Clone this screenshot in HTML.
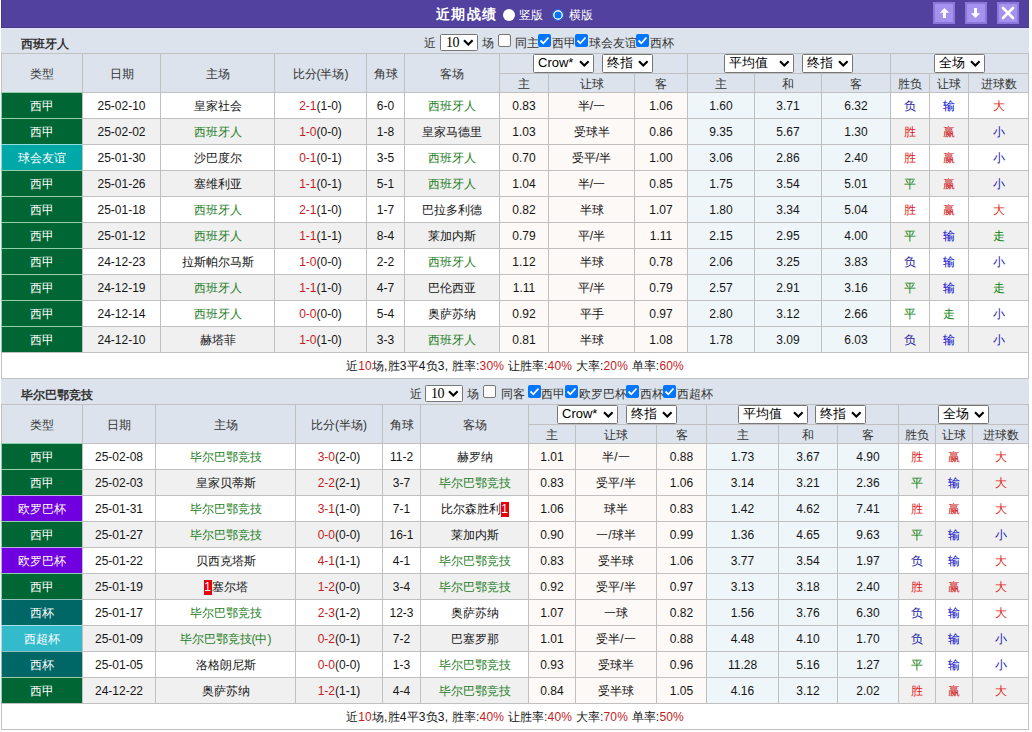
<!DOCTYPE html>
<html><head><meta charset="utf-8"><style>
*{margin:0;padding:0;box-sizing:border-box}
html,body{width:1032px;height:732px;overflow:hidden;background:#fff}
body{position:relative;font-family:"Liberation Sans",sans-serif;font-size:12px;color:#333}
body>div{position:absolute}
.c{text-align:center;white-space:nowrap;overflow:hidden;color:#151515;padding-top:1px}
.sm{letter-spacing:0.17px}
.h{color:#333}
.ty{color:#fff}
.g{color:#1f7f1f}
.r{color:#c41c24}
.bd{display:inline-block;background:#e8000b;color:#fff;font-weight:normal;width:8px;height:15px;line-height:15px;text-align:center;vertical-align:middle}
.sel{background:#fff;border:1px solid #767676;border-radius:1.5px;font-size:13px;color:#000;padding-left:4px;white-space:nowrap}
.sel i{position:absolute;right:3px;top:4.5px;width:11px;height:8px;line-height:0}
.s10{font-family:'Liberation Serif',serif;font-size:14px;padding-left:5px;padding-top:0;letter-spacing:-0.5px}
.s10 i{top:4px}
.ttl{color:#fff;font-weight:bold;font-size:14px;letter-spacing:1.3px}
.sec{font-weight:bold;color:#333}
</style></head>
<body>
<div style="left:1px;top:0;width:1028px;height:28px;background:#52419e;border-left:1px solid #483a87;border-bottom:1px solid #483a87"></div>
<div style="left:1px;top:28px;width:1028px;height:1px;background:#e4e4fa"></div>
<div style="left:1px;top:29px;width:1028px;height:24px;background:#dce3ec"></div>
<div style="left:1px;top:379px;width:1028px;height:25px;background:#dce3ec"></div>
<div style="left:1px;top:53px;width:1028px;height:326px;background:#c0c0c0"></div>
<div class="c h" style="left:2px;top:54px;width:80px;height:38px;background:#dce3ec;line-height:38px;">类型</div>
<div class="c h" style="left:83px;top:54px;width:77px;height:38px;background:#dce3ec;line-height:38px;">日期</div>
<div class="c h" style="left:161px;top:54px;width:113px;height:38px;background:#dce3ec;line-height:38px;">主场</div>
<div class="c h" style="left:275px;top:54px;width:91px;height:38px;background:#dce3ec;line-height:38px;">比分(半场)</div>
<div class="c h" style="left:367px;top:54px;width:37px;height:38px;background:#dce3ec;line-height:38px;">角球</div>
<div class="c h" style="left:405px;top:54px;width:94px;height:38px;background:#dce3ec;line-height:38px;">客场</div>
<div class="c h" style="left:500px;top:54px;width:187px;height:19px;background:#dce3ec;line-height:19px;"></div>
<div class="c h" style="left:688px;top:54px;width:202px;height:19px;background:#dce3ec;line-height:19px;"></div>
<div class="c h" style="left:891px;top:54px;width:137px;height:19px;background:#dce3ec;line-height:19px;"></div>
<div class="c h" style="left:500px;top:74px;width:48px;height:18px;background:#dce3ec;line-height:18px;">主</div>
<div class="c h" style="left:549px;top:74px;width:85px;height:18px;background:#dce3ec;line-height:18px;">让球</div>
<div class="c h" style="left:635px;top:74px;width:52px;height:18px;background:#dce3ec;line-height:18px;">客</div>
<div class="c h" style="left:688px;top:74px;width:66px;height:18px;background:#dce3ec;line-height:18px;">主</div>
<div class="c h" style="left:755px;top:74px;width:66px;height:18px;background:#dce3ec;line-height:18px;">和</div>
<div class="c h" style="left:822px;top:74px;width:68px;height:18px;background:#dce3ec;line-height:18px;">客</div>
<div class="c h" style="left:891px;top:74px;width:38px;height:18px;background:#dce3ec;line-height:18px;">胜负</div>
<div class="c h" style="left:930px;top:74px;width:38px;height:18px;background:#dce3ec;line-height:18px;">让球</div>
<div class="c h" style="left:969px;top:74px;width:59px;height:18px;background:#dce3ec;line-height:18px;">进球数</div>
<div class="c ty" style="left:1px;top:92px;width:81px;height:26px;background:#006633;border-top:1px solid #8fcfaa;border-left:1px solid #8fcfaa;line-height:25px">西甲</div>
<div class="c" style="left:83px;top:93px;width:77px;height:25px;background:#ffffff;line-height:25px;">25-02-10</div>
<div class="c" style="left:161px;top:93px;width:113px;height:25px;background:#ffffff;line-height:25px;"><span class="">皇家社会</span></div>
<div class="c" style="left:275px;top:93px;width:91px;height:25px;background:#ffffff;line-height:25px;"><span class="r">2-1</span>(1-0)</div>
<div class="c" style="left:367px;top:93px;width:37px;height:25px;background:#ffffff;line-height:25px;">6-0</div>
<div class="c" style="left:405px;top:93px;width:94px;height:25px;background:#ffffff;line-height:25px;"><span class="g">西班牙人</span></div>
<div class="c" style="left:500px;top:93px;width:48px;height:25px;background:#fdf9f6;line-height:25px;">0.83</div>
<div class="c" style="left:549px;top:93px;width:85px;height:25px;background:#fdf9f6;line-height:25px;">半/一</div>
<div class="c" style="left:635px;top:93px;width:52px;height:25px;background:#fdf9f6;line-height:25px;">1.06</div>
<div class="c" style="left:688px;top:93px;width:66px;height:25px;background:#eff6fa;line-height:25px;">1.60</div>
<div class="c" style="left:755px;top:93px;width:66px;height:25px;background:#eff6fa;line-height:25px;">3.71</div>
<div class="c" style="left:822px;top:93px;width:68px;height:25px;background:#eff6fa;line-height:25px;">6.32</div>
<div class="c" style="left:891px;top:93px;width:38px;height:25px;background:#ffffff;line-height:25px;"><span style="color:#1a1aa0">负</span></div>
<div class="c" style="left:930px;top:93px;width:38px;height:25px;background:#ffffff;line-height:25px;"><span style="color:#0000c8">输</span></div>
<div class="c" style="left:969px;top:93px;width:59px;height:25px;background:#ffffff;line-height:25px;"><span style="color:#e02818">大</span></div>
<div class="c ty" style="left:1px;top:118px;width:81px;height:26px;background:#006633;border-top:1px solid #8fcfaa;border-left:1px solid #8fcfaa;line-height:25px">西甲</div>
<div class="c" style="left:83px;top:119px;width:77px;height:25px;background:#f0f0f0;line-height:25px;">25-02-02</div>
<div class="c" style="left:161px;top:119px;width:113px;height:25px;background:#f0f0f0;line-height:25px;"><span class="g">西班牙人</span></div>
<div class="c" style="left:275px;top:119px;width:91px;height:25px;background:#f0f0f0;line-height:25px;"><span class="r">1-0</span>(0-0)</div>
<div class="c" style="left:367px;top:119px;width:37px;height:25px;background:#f0f0f0;line-height:25px;">1-8</div>
<div class="c" style="left:405px;top:119px;width:94px;height:25px;background:#f0f0f0;line-height:25px;"><span class="">皇家马德里</span></div>
<div class="c" style="left:500px;top:119px;width:48px;height:25px;background:#fdf9f6;line-height:25px;">1.03</div>
<div class="c" style="left:549px;top:119px;width:85px;height:25px;background:#fdf9f6;line-height:25px;">受球半</div>
<div class="c" style="left:635px;top:119px;width:52px;height:25px;background:#fdf9f6;line-height:25px;">0.86</div>
<div class="c" style="left:688px;top:119px;width:66px;height:25px;background:#eff6fa;line-height:25px;">9.35</div>
<div class="c" style="left:755px;top:119px;width:66px;height:25px;background:#eff6fa;line-height:25px;">5.67</div>
<div class="c" style="left:822px;top:119px;width:68px;height:25px;background:#eff6fa;line-height:25px;">1.30</div>
<div class="c" style="left:891px;top:119px;width:38px;height:25px;background:#f0f0f0;line-height:25px;"><span style="color:#e01818">胜</span></div>
<div class="c" style="left:930px;top:119px;width:38px;height:25px;background:#f0f0f0;line-height:25px;"><span style="color:#d01818">赢</span></div>
<div class="c" style="left:969px;top:119px;width:59px;height:25px;background:#f0f0f0;line-height:25px;"><span style="color:#1a1ab0">小</span></div>
<div class="c ty" style="left:1px;top:144px;width:81px;height:26px;background:#00a8a8;border-top:1px solid #8fdcdc;border-left:1px solid #8fdcdc;line-height:25px">球会友谊</div>
<div class="c" style="left:83px;top:145px;width:77px;height:25px;background:#ffffff;line-height:25px;">25-01-30</div>
<div class="c" style="left:161px;top:145px;width:113px;height:25px;background:#ffffff;line-height:25px;"><span class="">沙巴度尔</span></div>
<div class="c" style="left:275px;top:145px;width:91px;height:25px;background:#ffffff;line-height:25px;"><span class="r">0-1</span>(0-1)</div>
<div class="c" style="left:367px;top:145px;width:37px;height:25px;background:#ffffff;line-height:25px;">3-5</div>
<div class="c" style="left:405px;top:145px;width:94px;height:25px;background:#ffffff;line-height:25px;"><span class="g">西班牙人</span></div>
<div class="c" style="left:500px;top:145px;width:48px;height:25px;background:#fdf9f6;line-height:25px;">0.70</div>
<div class="c" style="left:549px;top:145px;width:85px;height:25px;background:#fdf9f6;line-height:25px;">受平/半</div>
<div class="c" style="left:635px;top:145px;width:52px;height:25px;background:#fdf9f6;line-height:25px;">1.00</div>
<div class="c" style="left:688px;top:145px;width:66px;height:25px;background:#eff6fa;line-height:25px;">3.06</div>
<div class="c" style="left:755px;top:145px;width:66px;height:25px;background:#eff6fa;line-height:25px;">2.86</div>
<div class="c" style="left:822px;top:145px;width:68px;height:25px;background:#eff6fa;line-height:25px;">2.40</div>
<div class="c" style="left:891px;top:145px;width:38px;height:25px;background:#ffffff;line-height:25px;"><span style="color:#e01818">胜</span></div>
<div class="c" style="left:930px;top:145px;width:38px;height:25px;background:#ffffff;line-height:25px;"><span style="color:#d01818">赢</span></div>
<div class="c" style="left:969px;top:145px;width:59px;height:25px;background:#ffffff;line-height:25px;"><span style="color:#1a1ab0">小</span></div>
<div class="c ty" style="left:1px;top:170px;width:81px;height:26px;background:#006633;border-top:1px solid #8fcfaa;border-left:1px solid #8fcfaa;line-height:25px">西甲</div>
<div class="c" style="left:83px;top:171px;width:77px;height:25px;background:#f0f0f0;line-height:25px;">25-01-26</div>
<div class="c" style="left:161px;top:171px;width:113px;height:25px;background:#f0f0f0;line-height:25px;"><span class="">塞维利亚</span></div>
<div class="c" style="left:275px;top:171px;width:91px;height:25px;background:#f0f0f0;line-height:25px;"><span class="r">1-1</span>(0-1)</div>
<div class="c" style="left:367px;top:171px;width:37px;height:25px;background:#f0f0f0;line-height:25px;">5-1</div>
<div class="c" style="left:405px;top:171px;width:94px;height:25px;background:#f0f0f0;line-height:25px;"><span class="g">西班牙人</span></div>
<div class="c" style="left:500px;top:171px;width:48px;height:25px;background:#fdf9f6;line-height:25px;">1.04</div>
<div class="c" style="left:549px;top:171px;width:85px;height:25px;background:#fdf9f6;line-height:25px;">半/一</div>
<div class="c" style="left:635px;top:171px;width:52px;height:25px;background:#fdf9f6;line-height:25px;">0.85</div>
<div class="c" style="left:688px;top:171px;width:66px;height:25px;background:#eff6fa;line-height:25px;">1.75</div>
<div class="c" style="left:755px;top:171px;width:66px;height:25px;background:#eff6fa;line-height:25px;">3.54</div>
<div class="c" style="left:822px;top:171px;width:68px;height:25px;background:#eff6fa;line-height:25px;">5.01</div>
<div class="c" style="left:891px;top:171px;width:38px;height:25px;background:#f0f0f0;line-height:25px;"><span style="color:#0a800a">平</span></div>
<div class="c" style="left:930px;top:171px;width:38px;height:25px;background:#f0f0f0;line-height:25px;"><span style="color:#d01818">赢</span></div>
<div class="c" style="left:969px;top:171px;width:59px;height:25px;background:#f0f0f0;line-height:25px;"><span style="color:#1a1ab0">小</span></div>
<div class="c ty" style="left:1px;top:196px;width:81px;height:26px;background:#006633;border-top:1px solid #8fcfaa;border-left:1px solid #8fcfaa;line-height:25px">西甲</div>
<div class="c" style="left:83px;top:197px;width:77px;height:25px;background:#ffffff;line-height:25px;">25-01-18</div>
<div class="c" style="left:161px;top:197px;width:113px;height:25px;background:#ffffff;line-height:25px;"><span class="g">西班牙人</span></div>
<div class="c" style="left:275px;top:197px;width:91px;height:25px;background:#ffffff;line-height:25px;"><span class="r">2-1</span>(1-0)</div>
<div class="c" style="left:367px;top:197px;width:37px;height:25px;background:#ffffff;line-height:25px;">1-7</div>
<div class="c" style="left:405px;top:197px;width:94px;height:25px;background:#ffffff;line-height:25px;"><span class="">巴拉多利德</span></div>
<div class="c" style="left:500px;top:197px;width:48px;height:25px;background:#fdf9f6;line-height:25px;">0.82</div>
<div class="c" style="left:549px;top:197px;width:85px;height:25px;background:#fdf9f6;line-height:25px;">半球</div>
<div class="c" style="left:635px;top:197px;width:52px;height:25px;background:#fdf9f6;line-height:25px;">1.07</div>
<div class="c" style="left:688px;top:197px;width:66px;height:25px;background:#eff6fa;line-height:25px;">1.80</div>
<div class="c" style="left:755px;top:197px;width:66px;height:25px;background:#eff6fa;line-height:25px;">3.34</div>
<div class="c" style="left:822px;top:197px;width:68px;height:25px;background:#eff6fa;line-height:25px;">5.04</div>
<div class="c" style="left:891px;top:197px;width:38px;height:25px;background:#ffffff;line-height:25px;"><span style="color:#e01818">胜</span></div>
<div class="c" style="left:930px;top:197px;width:38px;height:25px;background:#ffffff;line-height:25px;"><span style="color:#d01818">赢</span></div>
<div class="c" style="left:969px;top:197px;width:59px;height:25px;background:#ffffff;line-height:25px;"><span style="color:#e02818">大</span></div>
<div class="c ty" style="left:1px;top:222px;width:81px;height:26px;background:#006633;border-top:1px solid #8fcfaa;border-left:1px solid #8fcfaa;line-height:25px">西甲</div>
<div class="c" style="left:83px;top:223px;width:77px;height:25px;background:#f0f0f0;line-height:25px;">25-01-12</div>
<div class="c" style="left:161px;top:223px;width:113px;height:25px;background:#f0f0f0;line-height:25px;"><span class="g">西班牙人</span></div>
<div class="c" style="left:275px;top:223px;width:91px;height:25px;background:#f0f0f0;line-height:25px;"><span class="r">1-1</span>(1-1)</div>
<div class="c" style="left:367px;top:223px;width:37px;height:25px;background:#f0f0f0;line-height:25px;">8-4</div>
<div class="c" style="left:405px;top:223px;width:94px;height:25px;background:#f0f0f0;line-height:25px;"><span class="">莱加内斯</span></div>
<div class="c" style="left:500px;top:223px;width:48px;height:25px;background:#fdf9f6;line-height:25px;">0.79</div>
<div class="c" style="left:549px;top:223px;width:85px;height:25px;background:#fdf9f6;line-height:25px;">平/半</div>
<div class="c" style="left:635px;top:223px;width:52px;height:25px;background:#fdf9f6;line-height:25px;">1.11</div>
<div class="c" style="left:688px;top:223px;width:66px;height:25px;background:#eff6fa;line-height:25px;">2.15</div>
<div class="c" style="left:755px;top:223px;width:66px;height:25px;background:#eff6fa;line-height:25px;">2.95</div>
<div class="c" style="left:822px;top:223px;width:68px;height:25px;background:#eff6fa;line-height:25px;">4.00</div>
<div class="c" style="left:891px;top:223px;width:38px;height:25px;background:#f0f0f0;line-height:25px;"><span style="color:#0a800a">平</span></div>
<div class="c" style="left:930px;top:223px;width:38px;height:25px;background:#f0f0f0;line-height:25px;"><span style="color:#0000c8">输</span></div>
<div class="c" style="left:969px;top:223px;width:59px;height:25px;background:#f0f0f0;line-height:25px;"><span style="color:#0a800a">走</span></div>
<div class="c ty" style="left:1px;top:248px;width:81px;height:26px;background:#006633;border-top:1px solid #8fcfaa;border-left:1px solid #8fcfaa;line-height:25px">西甲</div>
<div class="c" style="left:83px;top:249px;width:77px;height:25px;background:#ffffff;line-height:25px;">24-12-23</div>
<div class="c" style="left:161px;top:249px;width:113px;height:25px;background:#ffffff;line-height:25px;"><span class="">拉斯帕尔马斯</span></div>
<div class="c" style="left:275px;top:249px;width:91px;height:25px;background:#ffffff;line-height:25px;"><span class="r">1-0</span>(0-0)</div>
<div class="c" style="left:367px;top:249px;width:37px;height:25px;background:#ffffff;line-height:25px;">2-2</div>
<div class="c" style="left:405px;top:249px;width:94px;height:25px;background:#ffffff;line-height:25px;"><span class="g">西班牙人</span></div>
<div class="c" style="left:500px;top:249px;width:48px;height:25px;background:#fdf9f6;line-height:25px;">1.12</div>
<div class="c" style="left:549px;top:249px;width:85px;height:25px;background:#fdf9f6;line-height:25px;">半球</div>
<div class="c" style="left:635px;top:249px;width:52px;height:25px;background:#fdf9f6;line-height:25px;">0.78</div>
<div class="c" style="left:688px;top:249px;width:66px;height:25px;background:#eff6fa;line-height:25px;">2.06</div>
<div class="c" style="left:755px;top:249px;width:66px;height:25px;background:#eff6fa;line-height:25px;">3.25</div>
<div class="c" style="left:822px;top:249px;width:68px;height:25px;background:#eff6fa;line-height:25px;">3.83</div>
<div class="c" style="left:891px;top:249px;width:38px;height:25px;background:#ffffff;line-height:25px;"><span style="color:#1a1aa0">负</span></div>
<div class="c" style="left:930px;top:249px;width:38px;height:25px;background:#ffffff;line-height:25px;"><span style="color:#0000c8">输</span></div>
<div class="c" style="left:969px;top:249px;width:59px;height:25px;background:#ffffff;line-height:25px;"><span style="color:#1a1ab0">小</span></div>
<div class="c ty" style="left:1px;top:274px;width:81px;height:26px;background:#006633;border-top:1px solid #8fcfaa;border-left:1px solid #8fcfaa;line-height:25px">西甲</div>
<div class="c" style="left:83px;top:275px;width:77px;height:25px;background:#f0f0f0;line-height:25px;">24-12-19</div>
<div class="c" style="left:161px;top:275px;width:113px;height:25px;background:#f0f0f0;line-height:25px;"><span class="g">西班牙人</span></div>
<div class="c" style="left:275px;top:275px;width:91px;height:25px;background:#f0f0f0;line-height:25px;"><span class="r">1-1</span>(1-0)</div>
<div class="c" style="left:367px;top:275px;width:37px;height:25px;background:#f0f0f0;line-height:25px;">4-7</div>
<div class="c" style="left:405px;top:275px;width:94px;height:25px;background:#f0f0f0;line-height:25px;"><span class="">巴伦西亚</span></div>
<div class="c" style="left:500px;top:275px;width:48px;height:25px;background:#fdf9f6;line-height:25px;">1.11</div>
<div class="c" style="left:549px;top:275px;width:85px;height:25px;background:#fdf9f6;line-height:25px;">平/半</div>
<div class="c" style="left:635px;top:275px;width:52px;height:25px;background:#fdf9f6;line-height:25px;">0.79</div>
<div class="c" style="left:688px;top:275px;width:66px;height:25px;background:#eff6fa;line-height:25px;">2.57</div>
<div class="c" style="left:755px;top:275px;width:66px;height:25px;background:#eff6fa;line-height:25px;">2.91</div>
<div class="c" style="left:822px;top:275px;width:68px;height:25px;background:#eff6fa;line-height:25px;">3.16</div>
<div class="c" style="left:891px;top:275px;width:38px;height:25px;background:#f0f0f0;line-height:25px;"><span style="color:#0a800a">平</span></div>
<div class="c" style="left:930px;top:275px;width:38px;height:25px;background:#f0f0f0;line-height:25px;"><span style="color:#0000c8">输</span></div>
<div class="c" style="left:969px;top:275px;width:59px;height:25px;background:#f0f0f0;line-height:25px;"><span style="color:#0a800a">走</span></div>
<div class="c ty" style="left:1px;top:300px;width:81px;height:26px;background:#006633;border-top:1px solid #8fcfaa;border-left:1px solid #8fcfaa;line-height:25px">西甲</div>
<div class="c" style="left:83px;top:301px;width:77px;height:25px;background:#ffffff;line-height:25px;">24-12-14</div>
<div class="c" style="left:161px;top:301px;width:113px;height:25px;background:#ffffff;line-height:25px;"><span class="g">西班牙人</span></div>
<div class="c" style="left:275px;top:301px;width:91px;height:25px;background:#ffffff;line-height:25px;"><span class="r">0-0</span>(0-0)</div>
<div class="c" style="left:367px;top:301px;width:37px;height:25px;background:#ffffff;line-height:25px;">5-4</div>
<div class="c" style="left:405px;top:301px;width:94px;height:25px;background:#ffffff;line-height:25px;"><span class="">奥萨苏纳</span></div>
<div class="c" style="left:500px;top:301px;width:48px;height:25px;background:#fdf9f6;line-height:25px;">0.92</div>
<div class="c" style="left:549px;top:301px;width:85px;height:25px;background:#fdf9f6;line-height:25px;">平手</div>
<div class="c" style="left:635px;top:301px;width:52px;height:25px;background:#fdf9f6;line-height:25px;">0.97</div>
<div class="c" style="left:688px;top:301px;width:66px;height:25px;background:#eff6fa;line-height:25px;">2.80</div>
<div class="c" style="left:755px;top:301px;width:66px;height:25px;background:#eff6fa;line-height:25px;">3.12</div>
<div class="c" style="left:822px;top:301px;width:68px;height:25px;background:#eff6fa;line-height:25px;">2.66</div>
<div class="c" style="left:891px;top:301px;width:38px;height:25px;background:#ffffff;line-height:25px;"><span style="color:#0a800a">平</span></div>
<div class="c" style="left:930px;top:301px;width:38px;height:25px;background:#ffffff;line-height:25px;"><span style="color:#0a800a">走</span></div>
<div class="c" style="left:969px;top:301px;width:59px;height:25px;background:#ffffff;line-height:25px;"><span style="color:#1a1ab0">小</span></div>
<div class="c ty" style="left:1px;top:326px;width:81px;height:26px;background:#006633;border-top:1px solid #8fcfaa;border-left:1px solid #8fcfaa;line-height:25px">西甲</div>
<div class="c" style="left:83px;top:327px;width:77px;height:25px;background:#f0f0f0;line-height:25px;">24-12-10</div>
<div class="c" style="left:161px;top:327px;width:113px;height:25px;background:#f0f0f0;line-height:25px;"><span class="">赫塔菲</span></div>
<div class="c" style="left:275px;top:327px;width:91px;height:25px;background:#f0f0f0;line-height:25px;"><span class="r">1-0</span>(1-0)</div>
<div class="c" style="left:367px;top:327px;width:37px;height:25px;background:#f0f0f0;line-height:25px;">3-3</div>
<div class="c" style="left:405px;top:327px;width:94px;height:25px;background:#f0f0f0;line-height:25px;"><span class="g">西班牙人</span></div>
<div class="c" style="left:500px;top:327px;width:48px;height:25px;background:#fdf9f6;line-height:25px;">0.81</div>
<div class="c" style="left:549px;top:327px;width:85px;height:25px;background:#fdf9f6;line-height:25px;">半球</div>
<div class="c" style="left:635px;top:327px;width:52px;height:25px;background:#fdf9f6;line-height:25px;">1.08</div>
<div class="c" style="left:688px;top:327px;width:66px;height:25px;background:#eff6fa;line-height:25px;">1.78</div>
<div class="c" style="left:755px;top:327px;width:66px;height:25px;background:#eff6fa;line-height:25px;">3.09</div>
<div class="c" style="left:822px;top:327px;width:68px;height:25px;background:#eff6fa;line-height:25px;">6.03</div>
<div class="c" style="left:891px;top:327px;width:38px;height:25px;background:#f0f0f0;line-height:25px;"><span style="color:#1a1aa0">负</span></div>
<div class="c" style="left:930px;top:327px;width:38px;height:25px;background:#f0f0f0;line-height:25px;"><span style="color:#0000c8">输</span></div>
<div class="c" style="left:969px;top:327px;width:59px;height:25px;background:#f0f0f0;line-height:25px;"><span style="color:#1a1ab0">小</span></div>
<div class="c sm" style="left:2px;top:353px;width:1026px;height:25px;background:#ffffff;line-height:25px;">近<span class="r">10</span>场,胜3平4负3, 胜率:<span class="r">30%</span> 让胜率:<span class="r">40%</span> 大率:<span class="r">20%</span> 单率:<span class="r">60%</span></div>
<div class="sel" style="left:533px;top:54px;width:61px;height:19px;line-height:16px">Crow*<i><svg width="11" height="8"><path d="M1 1.3 L5.3 5.6 L9.6 1.3" stroke="#000" stroke-width="2.1" fill="none"/></svg></i></div>
<div class="sel" style="left:602px;top:54px;width:51px;height:19px;line-height:16px">终指<i><svg width="11" height="8"><path d="M1 1.3 L5.3 5.6 L9.6 1.3" stroke="#000" stroke-width="2.1" fill="none"/></svg></i></div>
<div class="sel" style="left:724px;top:54px;width:70px;height:19px;line-height:16px">平均值<i><svg width="11" height="8"><path d="M1 1.3 L5.3 5.6 L9.6 1.3" stroke="#000" stroke-width="2.1" fill="none"/></svg></i></div>
<div class="sel" style="left:802px;top:54px;width:51px;height:19px;line-height:16px">终指<i><svg width="11" height="8"><path d="M1 1.3 L5.3 5.6 L9.6 1.3" stroke="#000" stroke-width="2.1" fill="none"/></svg></i></div>
<div class="sel" style="left:934px;top:54px;width:51px;height:19px;line-height:16px">全场<i><svg width="11" height="8"><path d="M1 1.3 L5.3 5.6 L9.6 1.3" stroke="#000" stroke-width="2.1" fill="none"/></svg></i></div>
<div style="left:1px;top:404px;width:1028px;height:326px;background:#c0c0c0"></div>
<div class="c h" style="left:2px;top:405px;width:80px;height:38px;background:#dce3ec;line-height:38px;">类型</div>
<div class="c h" style="left:83px;top:405px;width:72px;height:38px;background:#dce3ec;line-height:38px;">日期</div>
<div class="c h" style="left:156px;top:405px;width:139px;height:38px;background:#dce3ec;line-height:38px;">主场</div>
<div class="c h" style="left:296px;top:405px;width:86px;height:38px;background:#dce3ec;line-height:38px;">比分(半场)</div>
<div class="c h" style="left:383px;top:405px;width:37px;height:38px;background:#dce3ec;line-height:38px;">角球</div>
<div class="c h" style="left:421px;top:405px;width:107px;height:38px;background:#dce3ec;line-height:38px;">客场</div>
<div class="c h" style="left:529px;top:405px;width:177px;height:19px;background:#dce3ec;line-height:19px;"></div>
<div class="c h" style="left:707px;top:405px;width:191px;height:19px;background:#dce3ec;line-height:19px;"></div>
<div class="c h" style="left:899px;top:405px;width:129px;height:19px;background:#dce3ec;line-height:19px;"></div>
<div class="c h" style="left:529px;top:425px;width:46px;height:18px;background:#dce3ec;line-height:18px;">主</div>
<div class="c h" style="left:576px;top:425px;width:80px;height:18px;background:#dce3ec;line-height:18px;">让球</div>
<div class="c h" style="left:657px;top:425px;width:49px;height:18px;background:#dce3ec;line-height:18px;">客</div>
<div class="c h" style="left:707px;top:425px;width:71px;height:18px;background:#dce3ec;line-height:18px;">主</div>
<div class="c h" style="left:779px;top:425px;width:58px;height:18px;background:#dce3ec;line-height:18px;">和</div>
<div class="c h" style="left:838px;top:425px;width:60px;height:18px;background:#dce3ec;line-height:18px;">客</div>
<div class="c h" style="left:899px;top:425px;width:36px;height:18px;background:#dce3ec;line-height:18px;">胜负</div>
<div class="c h" style="left:936px;top:425px;width:36px;height:18px;background:#dce3ec;line-height:18px;">让球</div>
<div class="c h" style="left:973px;top:425px;width:55px;height:18px;background:#dce3ec;line-height:18px;">进球数</div>
<div class="c ty" style="left:1px;top:443px;width:81px;height:26px;background:#006633;border-top:1px solid #8fcfaa;border-left:1px solid #8fcfaa;line-height:25px">西甲</div>
<div class="c" style="left:83px;top:444px;width:72px;height:25px;background:#ffffff;line-height:25px;">25-02-08</div>
<div class="c" style="left:156px;top:444px;width:139px;height:25px;background:#ffffff;line-height:25px;"><span class="g">毕尔巴鄂竞技</span></div>
<div class="c" style="left:296px;top:444px;width:86px;height:25px;background:#ffffff;line-height:25px;"><span class="r">3-0</span>(2-0)</div>
<div class="c" style="left:383px;top:444px;width:37px;height:25px;background:#ffffff;line-height:25px;">11-2</div>
<div class="c" style="left:421px;top:444px;width:107px;height:25px;background:#ffffff;line-height:25px;"><span class="">赫罗纳</span></div>
<div class="c" style="left:529px;top:444px;width:46px;height:25px;background:#fdf9f6;line-height:25px;">1.01</div>
<div class="c" style="left:576px;top:444px;width:80px;height:25px;background:#fdf9f6;line-height:25px;">半/一</div>
<div class="c" style="left:657px;top:444px;width:49px;height:25px;background:#fdf9f6;line-height:25px;">0.88</div>
<div class="c" style="left:707px;top:444px;width:71px;height:25px;background:#eff6fa;line-height:25px;">1.73</div>
<div class="c" style="left:779px;top:444px;width:58px;height:25px;background:#eff6fa;line-height:25px;">3.67</div>
<div class="c" style="left:838px;top:444px;width:60px;height:25px;background:#eff6fa;line-height:25px;">4.90</div>
<div class="c" style="left:899px;top:444px;width:36px;height:25px;background:#ffffff;line-height:25px;"><span style="color:#e01818">胜</span></div>
<div class="c" style="left:936px;top:444px;width:36px;height:25px;background:#ffffff;line-height:25px;"><span style="color:#d01818">赢</span></div>
<div class="c" style="left:973px;top:444px;width:55px;height:25px;background:#ffffff;line-height:25px;"><span style="color:#e02818">大</span></div>
<div class="c ty" style="left:1px;top:469px;width:81px;height:26px;background:#006633;border-top:1px solid #8fcfaa;border-left:1px solid #8fcfaa;line-height:25px">西甲</div>
<div class="c" style="left:83px;top:470px;width:72px;height:25px;background:#f0f0f0;line-height:25px;">25-02-03</div>
<div class="c" style="left:156px;top:470px;width:139px;height:25px;background:#f0f0f0;line-height:25px;"><span class="">皇家贝蒂斯</span></div>
<div class="c" style="left:296px;top:470px;width:86px;height:25px;background:#f0f0f0;line-height:25px;"><span class="r">2-2</span>(2-1)</div>
<div class="c" style="left:383px;top:470px;width:37px;height:25px;background:#f0f0f0;line-height:25px;">3-7</div>
<div class="c" style="left:421px;top:470px;width:107px;height:25px;background:#f0f0f0;line-height:25px;"><span class="g">毕尔巴鄂竞技</span></div>
<div class="c" style="left:529px;top:470px;width:46px;height:25px;background:#fdf9f6;line-height:25px;">0.83</div>
<div class="c" style="left:576px;top:470px;width:80px;height:25px;background:#fdf9f6;line-height:25px;">受平/半</div>
<div class="c" style="left:657px;top:470px;width:49px;height:25px;background:#fdf9f6;line-height:25px;">1.06</div>
<div class="c" style="left:707px;top:470px;width:71px;height:25px;background:#eff6fa;line-height:25px;">3.14</div>
<div class="c" style="left:779px;top:470px;width:58px;height:25px;background:#eff6fa;line-height:25px;">3.21</div>
<div class="c" style="left:838px;top:470px;width:60px;height:25px;background:#eff6fa;line-height:25px;">2.36</div>
<div class="c" style="left:899px;top:470px;width:36px;height:25px;background:#f0f0f0;line-height:25px;"><span style="color:#0a800a">平</span></div>
<div class="c" style="left:936px;top:470px;width:36px;height:25px;background:#f0f0f0;line-height:25px;"><span style="color:#0000c8">输</span></div>
<div class="c" style="left:973px;top:470px;width:55px;height:25px;background:#f0f0f0;line-height:25px;"><span style="color:#e02818">大</span></div>
<div class="c ty" style="left:1px;top:495px;width:81px;height:26px;background:#7000e0;border-top:1px solid #c0a8e8;border-left:1px solid #c0a8e8;line-height:25px">欧罗巴杯</div>
<div class="c" style="left:83px;top:496px;width:72px;height:25px;background:#ffffff;line-height:25px;">25-01-31</div>
<div class="c" style="left:156px;top:496px;width:139px;height:25px;background:#ffffff;line-height:25px;"><span class="g">毕尔巴鄂竞技</span></div>
<div class="c" style="left:296px;top:496px;width:86px;height:25px;background:#ffffff;line-height:25px;"><span class="r">3-1</span>(1-0)</div>
<div class="c" style="left:383px;top:496px;width:37px;height:25px;background:#ffffff;line-height:25px;">7-1</div>
<div class="c" style="left:421px;top:496px;width:107px;height:25px;background:#ffffff;line-height:25px;"><span class="">比尔森胜利<b class="bd">1</b></span></div>
<div class="c" style="left:529px;top:496px;width:46px;height:25px;background:#fdf9f6;line-height:25px;">1.06</div>
<div class="c" style="left:576px;top:496px;width:80px;height:25px;background:#fdf9f6;line-height:25px;">球半</div>
<div class="c" style="left:657px;top:496px;width:49px;height:25px;background:#fdf9f6;line-height:25px;">0.83</div>
<div class="c" style="left:707px;top:496px;width:71px;height:25px;background:#eff6fa;line-height:25px;">1.42</div>
<div class="c" style="left:779px;top:496px;width:58px;height:25px;background:#eff6fa;line-height:25px;">4.62</div>
<div class="c" style="left:838px;top:496px;width:60px;height:25px;background:#eff6fa;line-height:25px;">7.41</div>
<div class="c" style="left:899px;top:496px;width:36px;height:25px;background:#ffffff;line-height:25px;"><span style="color:#e01818">胜</span></div>
<div class="c" style="left:936px;top:496px;width:36px;height:25px;background:#ffffff;line-height:25px;"><span style="color:#d01818">赢</span></div>
<div class="c" style="left:973px;top:496px;width:55px;height:25px;background:#ffffff;line-height:25px;"><span style="color:#e02818">大</span></div>
<div class="c ty" style="left:1px;top:521px;width:81px;height:26px;background:#006633;border-top:1px solid #8fcfaa;border-left:1px solid #8fcfaa;line-height:25px">西甲</div>
<div class="c" style="left:83px;top:522px;width:72px;height:25px;background:#f0f0f0;line-height:25px;">25-01-27</div>
<div class="c" style="left:156px;top:522px;width:139px;height:25px;background:#f0f0f0;line-height:25px;"><span class="g">毕尔巴鄂竞技</span></div>
<div class="c" style="left:296px;top:522px;width:86px;height:25px;background:#f0f0f0;line-height:25px;"><span class="r">0-0</span>(0-0)</div>
<div class="c" style="left:383px;top:522px;width:37px;height:25px;background:#f0f0f0;line-height:25px;">16-1</div>
<div class="c" style="left:421px;top:522px;width:107px;height:25px;background:#f0f0f0;line-height:25px;"><span class="">莱加内斯</span></div>
<div class="c" style="left:529px;top:522px;width:46px;height:25px;background:#fdf9f6;line-height:25px;">0.90</div>
<div class="c" style="left:576px;top:522px;width:80px;height:25px;background:#fdf9f6;line-height:25px;">一/球半</div>
<div class="c" style="left:657px;top:522px;width:49px;height:25px;background:#fdf9f6;line-height:25px;">0.99</div>
<div class="c" style="left:707px;top:522px;width:71px;height:25px;background:#eff6fa;line-height:25px;">1.36</div>
<div class="c" style="left:779px;top:522px;width:58px;height:25px;background:#eff6fa;line-height:25px;">4.65</div>
<div class="c" style="left:838px;top:522px;width:60px;height:25px;background:#eff6fa;line-height:25px;">9.63</div>
<div class="c" style="left:899px;top:522px;width:36px;height:25px;background:#f0f0f0;line-height:25px;"><span style="color:#0a800a">平</span></div>
<div class="c" style="left:936px;top:522px;width:36px;height:25px;background:#f0f0f0;line-height:25px;"><span style="color:#0000c8">输</span></div>
<div class="c" style="left:973px;top:522px;width:55px;height:25px;background:#f0f0f0;line-height:25px;"><span style="color:#1a1ab0">小</span></div>
<div class="c ty" style="left:1px;top:547px;width:81px;height:26px;background:#7000e0;border-top:1px solid #c0a8e8;border-left:1px solid #c0a8e8;line-height:25px">欧罗巴杯</div>
<div class="c" style="left:83px;top:548px;width:72px;height:25px;background:#ffffff;line-height:25px;">25-01-22</div>
<div class="c" style="left:156px;top:548px;width:139px;height:25px;background:#ffffff;line-height:25px;"><span class="">贝西克塔斯</span></div>
<div class="c" style="left:296px;top:548px;width:86px;height:25px;background:#ffffff;line-height:25px;"><span class="r">4-1</span>(1-1)</div>
<div class="c" style="left:383px;top:548px;width:37px;height:25px;background:#ffffff;line-height:25px;">4-1</div>
<div class="c" style="left:421px;top:548px;width:107px;height:25px;background:#ffffff;line-height:25px;"><span class="g">毕尔巴鄂竞技</span></div>
<div class="c" style="left:529px;top:548px;width:46px;height:25px;background:#fdf9f6;line-height:25px;">0.83</div>
<div class="c" style="left:576px;top:548px;width:80px;height:25px;background:#fdf9f6;line-height:25px;">受半球</div>
<div class="c" style="left:657px;top:548px;width:49px;height:25px;background:#fdf9f6;line-height:25px;">1.06</div>
<div class="c" style="left:707px;top:548px;width:71px;height:25px;background:#eff6fa;line-height:25px;">3.77</div>
<div class="c" style="left:779px;top:548px;width:58px;height:25px;background:#eff6fa;line-height:25px;">3.54</div>
<div class="c" style="left:838px;top:548px;width:60px;height:25px;background:#eff6fa;line-height:25px;">1.97</div>
<div class="c" style="left:899px;top:548px;width:36px;height:25px;background:#ffffff;line-height:25px;"><span style="color:#1a1aa0">负</span></div>
<div class="c" style="left:936px;top:548px;width:36px;height:25px;background:#ffffff;line-height:25px;"><span style="color:#0000c8">输</span></div>
<div class="c" style="left:973px;top:548px;width:55px;height:25px;background:#ffffff;line-height:25px;"><span style="color:#e02818">大</span></div>
<div class="c ty" style="left:1px;top:573px;width:81px;height:26px;background:#006633;border-top:1px solid #8fcfaa;border-left:1px solid #8fcfaa;line-height:25px">西甲</div>
<div class="c" style="left:83px;top:574px;width:72px;height:25px;background:#f0f0f0;line-height:25px;">25-01-19</div>
<div class="c" style="left:156px;top:574px;width:139px;height:25px;background:#f0f0f0;line-height:25px;"><span class=""><b class="bd">1</b>塞尔塔</span></div>
<div class="c" style="left:296px;top:574px;width:86px;height:25px;background:#f0f0f0;line-height:25px;"><span class="r">1-2</span>(0-0)</div>
<div class="c" style="left:383px;top:574px;width:37px;height:25px;background:#f0f0f0;line-height:25px;">3-4</div>
<div class="c" style="left:421px;top:574px;width:107px;height:25px;background:#f0f0f0;line-height:25px;"><span class="g">毕尔巴鄂竞技</span></div>
<div class="c" style="left:529px;top:574px;width:46px;height:25px;background:#fdf9f6;line-height:25px;">0.92</div>
<div class="c" style="left:576px;top:574px;width:80px;height:25px;background:#fdf9f6;line-height:25px;">受平/半</div>
<div class="c" style="left:657px;top:574px;width:49px;height:25px;background:#fdf9f6;line-height:25px;">0.97</div>
<div class="c" style="left:707px;top:574px;width:71px;height:25px;background:#eff6fa;line-height:25px;">3.13</div>
<div class="c" style="left:779px;top:574px;width:58px;height:25px;background:#eff6fa;line-height:25px;">3.18</div>
<div class="c" style="left:838px;top:574px;width:60px;height:25px;background:#eff6fa;line-height:25px;">2.40</div>
<div class="c" style="left:899px;top:574px;width:36px;height:25px;background:#f0f0f0;line-height:25px;"><span style="color:#e01818">胜</span></div>
<div class="c" style="left:936px;top:574px;width:36px;height:25px;background:#f0f0f0;line-height:25px;"><span style="color:#d01818">赢</span></div>
<div class="c" style="left:973px;top:574px;width:55px;height:25px;background:#f0f0f0;line-height:25px;"><span style="color:#e02818">大</span></div>
<div class="c ty" style="left:1px;top:599px;width:81px;height:26px;background:#006666;border-top:1px solid #8fc0c0;border-left:1px solid #8fc0c0;line-height:25px">西杯</div>
<div class="c" style="left:83px;top:600px;width:72px;height:25px;background:#ffffff;line-height:25px;">25-01-17</div>
<div class="c" style="left:156px;top:600px;width:139px;height:25px;background:#ffffff;line-height:25px;"><span class="g">毕尔巴鄂竞技</span></div>
<div class="c" style="left:296px;top:600px;width:86px;height:25px;background:#ffffff;line-height:25px;"><span class="r">2-3</span>(1-2)</div>
<div class="c" style="left:383px;top:600px;width:37px;height:25px;background:#ffffff;line-height:25px;">12-3</div>
<div class="c" style="left:421px;top:600px;width:107px;height:25px;background:#ffffff;line-height:25px;"><span class="">奥萨苏纳</span></div>
<div class="c" style="left:529px;top:600px;width:46px;height:25px;background:#fdf9f6;line-height:25px;">1.07</div>
<div class="c" style="left:576px;top:600px;width:80px;height:25px;background:#fdf9f6;line-height:25px;">一球</div>
<div class="c" style="left:657px;top:600px;width:49px;height:25px;background:#fdf9f6;line-height:25px;">0.82</div>
<div class="c" style="left:707px;top:600px;width:71px;height:25px;background:#eff6fa;line-height:25px;">1.56</div>
<div class="c" style="left:779px;top:600px;width:58px;height:25px;background:#eff6fa;line-height:25px;">3.76</div>
<div class="c" style="left:838px;top:600px;width:60px;height:25px;background:#eff6fa;line-height:25px;">6.30</div>
<div class="c" style="left:899px;top:600px;width:36px;height:25px;background:#ffffff;line-height:25px;"><span style="color:#1a1aa0">负</span></div>
<div class="c" style="left:936px;top:600px;width:36px;height:25px;background:#ffffff;line-height:25px;"><span style="color:#0000c8">输</span></div>
<div class="c" style="left:973px;top:600px;width:55px;height:25px;background:#ffffff;line-height:25px;"><span style="color:#e02818">大</span></div>
<div class="c ty" style="left:1px;top:625px;width:81px;height:26px;background:#33bbcc;border-top:1px solid #a8e0e8;border-left:1px solid #a8e0e8;line-height:25px">西超杯</div>
<div class="c" style="left:83px;top:626px;width:72px;height:25px;background:#f0f0f0;line-height:25px;">25-01-09</div>
<div class="c" style="left:156px;top:626px;width:139px;height:25px;background:#f0f0f0;line-height:25px;"><span class="g">毕尔巴鄂竞技(中)</span></div>
<div class="c" style="left:296px;top:626px;width:86px;height:25px;background:#f0f0f0;line-height:25px;"><span class="r">0-2</span>(0-1)</div>
<div class="c" style="left:383px;top:626px;width:37px;height:25px;background:#f0f0f0;line-height:25px;">7-2</div>
<div class="c" style="left:421px;top:626px;width:107px;height:25px;background:#f0f0f0;line-height:25px;"><span class="">巴塞罗那</span></div>
<div class="c" style="left:529px;top:626px;width:46px;height:25px;background:#fdf9f6;line-height:25px;">1.01</div>
<div class="c" style="left:576px;top:626px;width:80px;height:25px;background:#fdf9f6;line-height:25px;">受半/一</div>
<div class="c" style="left:657px;top:626px;width:49px;height:25px;background:#fdf9f6;line-height:25px;">0.88</div>
<div class="c" style="left:707px;top:626px;width:71px;height:25px;background:#eff6fa;line-height:25px;">4.48</div>
<div class="c" style="left:779px;top:626px;width:58px;height:25px;background:#eff6fa;line-height:25px;">4.10</div>
<div class="c" style="left:838px;top:626px;width:60px;height:25px;background:#eff6fa;line-height:25px;">1.70</div>
<div class="c" style="left:899px;top:626px;width:36px;height:25px;background:#f0f0f0;line-height:25px;"><span style="color:#1a1aa0">负</span></div>
<div class="c" style="left:936px;top:626px;width:36px;height:25px;background:#f0f0f0;line-height:25px;"><span style="color:#0000c8">输</span></div>
<div class="c" style="left:973px;top:626px;width:55px;height:25px;background:#f0f0f0;line-height:25px;"><span style="color:#1a1ab0">小</span></div>
<div class="c ty" style="left:1px;top:651px;width:81px;height:26px;background:#006666;border-top:1px solid #8fc0c0;border-left:1px solid #8fc0c0;line-height:25px">西杯</div>
<div class="c" style="left:83px;top:652px;width:72px;height:25px;background:#ffffff;line-height:25px;">25-01-05</div>
<div class="c" style="left:156px;top:652px;width:139px;height:25px;background:#ffffff;line-height:25px;"><span class="">洛格朗尼斯</span></div>
<div class="c" style="left:296px;top:652px;width:86px;height:25px;background:#ffffff;line-height:25px;"><span class="r">0-0</span>(0-0)</div>
<div class="c" style="left:383px;top:652px;width:37px;height:25px;background:#ffffff;line-height:25px;">1-3</div>
<div class="c" style="left:421px;top:652px;width:107px;height:25px;background:#ffffff;line-height:25px;"><span class="g">毕尔巴鄂竞技</span></div>
<div class="c" style="left:529px;top:652px;width:46px;height:25px;background:#fdf9f6;line-height:25px;">0.93</div>
<div class="c" style="left:576px;top:652px;width:80px;height:25px;background:#fdf9f6;line-height:25px;">受球半</div>
<div class="c" style="left:657px;top:652px;width:49px;height:25px;background:#fdf9f6;line-height:25px;">0.96</div>
<div class="c" style="left:707px;top:652px;width:71px;height:25px;background:#eff6fa;line-height:25px;">11.28</div>
<div class="c" style="left:779px;top:652px;width:58px;height:25px;background:#eff6fa;line-height:25px;">5.16</div>
<div class="c" style="left:838px;top:652px;width:60px;height:25px;background:#eff6fa;line-height:25px;">1.27</div>
<div class="c" style="left:899px;top:652px;width:36px;height:25px;background:#ffffff;line-height:25px;"><span style="color:#0a800a">平</span></div>
<div class="c" style="left:936px;top:652px;width:36px;height:25px;background:#ffffff;line-height:25px;"><span style="color:#0000c8">输</span></div>
<div class="c" style="left:973px;top:652px;width:55px;height:25px;background:#ffffff;line-height:25px;"><span style="color:#1a1ab0">小</span></div>
<div class="c ty" style="left:1px;top:677px;width:81px;height:26px;background:#006633;border-top:1px solid #8fcfaa;border-left:1px solid #8fcfaa;line-height:25px">西甲</div>
<div class="c" style="left:83px;top:678px;width:72px;height:25px;background:#f0f0f0;line-height:25px;">24-12-22</div>
<div class="c" style="left:156px;top:678px;width:139px;height:25px;background:#f0f0f0;line-height:25px;"><span class="">奥萨苏纳</span></div>
<div class="c" style="left:296px;top:678px;width:86px;height:25px;background:#f0f0f0;line-height:25px;"><span class="r">1-2</span>(1-1)</div>
<div class="c" style="left:383px;top:678px;width:37px;height:25px;background:#f0f0f0;line-height:25px;">4-4</div>
<div class="c" style="left:421px;top:678px;width:107px;height:25px;background:#f0f0f0;line-height:25px;"><span class="g">毕尔巴鄂竞技</span></div>
<div class="c" style="left:529px;top:678px;width:46px;height:25px;background:#fdf9f6;line-height:25px;">0.84</div>
<div class="c" style="left:576px;top:678px;width:80px;height:25px;background:#fdf9f6;line-height:25px;">受半球</div>
<div class="c" style="left:657px;top:678px;width:49px;height:25px;background:#fdf9f6;line-height:25px;">1.05</div>
<div class="c" style="left:707px;top:678px;width:71px;height:25px;background:#eff6fa;line-height:25px;">4.16</div>
<div class="c" style="left:779px;top:678px;width:58px;height:25px;background:#eff6fa;line-height:25px;">3.12</div>
<div class="c" style="left:838px;top:678px;width:60px;height:25px;background:#eff6fa;line-height:25px;">2.02</div>
<div class="c" style="left:899px;top:678px;width:36px;height:25px;background:#f0f0f0;line-height:25px;"><span style="color:#e01818">胜</span></div>
<div class="c" style="left:936px;top:678px;width:36px;height:25px;background:#f0f0f0;line-height:25px;"><span style="color:#d01818">赢</span></div>
<div class="c" style="left:973px;top:678px;width:55px;height:25px;background:#f0f0f0;line-height:25px;"><span style="color:#e02818">大</span></div>
<div class="c sm" style="left:2px;top:704px;width:1026px;height:25px;background:#ffffff;line-height:25px;">近<span class="r">10</span>场,胜4平3负3, 胜率:<span class="r">40%</span> 让胜率:<span class="r">40%</span> 大率:<span class="r">70%</span> 单率:<span class="r">50%</span></div>
<div class="sel" style="left:557px;top:405px;width:61px;height:19px;line-height:16px">Crow*<i><svg width="11" height="8"><path d="M1 1.3 L5.3 5.6 L9.6 1.3" stroke="#000" stroke-width="2.1" fill="none"/></svg></i></div>
<div class="sel" style="left:626px;top:405px;width:51px;height:19px;line-height:16px">终指<i><svg width="11" height="8"><path d="M1 1.3 L5.3 5.6 L9.6 1.3" stroke="#000" stroke-width="2.1" fill="none"/></svg></i></div>
<div class="sel" style="left:738px;top:405px;width:70px;height:19px;line-height:16px">平均值<i><svg width="11" height="8"><path d="M1 1.3 L5.3 5.6 L9.6 1.3" stroke="#000" stroke-width="2.1" fill="none"/></svg></i></div>
<div class="sel" style="left:815px;top:405px;width:51px;height:19px;line-height:16px">终指<i><svg width="11" height="8"><path d="M1 1.3 L5.3 5.6 L9.6 1.3" stroke="#000" stroke-width="2.1" fill="none"/></svg></i></div>
<div class="sel" style="left:938px;top:405px;width:51px;height:19px;line-height:16px">全场<i><svg width="11" height="8"><path d="M1 1.3 L5.3 5.6 L9.6 1.3" stroke="#000" stroke-width="2.1" fill="none"/></svg></i></div>
<div class="ttl" style="left:436px;top:4px;height:20px;line-height:20px">近期战绩</div>
<div style="left:502.5px;top:8.5px;width:12px;height:12px;border-radius:50%;background:#fff"></div>
<div style="left:519px;top:5px;height:20px;line-height:20px;color:#fff;font-size:12px">竖版</div>
<div style="left:552.4px;top:8.5px;width:12px;height:12px;border-radius:50%;background:#0075ff;border:1px solid #2a66d8;box-shadow:inset 0 0 0 1.5px #fff"></div>
<div style="left:569px;top:5px;height:20px;line-height:20px;color:#fff;font-size:12px">横版</div>
<div style="left:933px;top:2px;width:22px;height:22px;background:#a592ee;border:2px solid #8a78d8"><svg width="18" height="18" style="position:absolute;left:0;top:0"><path d="M4.9 8.8 L9.5 3.9 L14.1 8.8 Z M7.9 8.3 H11 V14 H7.9 Z" fill="#fff"/></svg></div>
<div style="left:965px;top:2px;width:22px;height:22px;background:#a592ee;border:2px solid #8a78d8"><svg width="18" height="18" style="position:absolute;left:0;top:0"><path d="M7 3.9 H10 V9.6 H7 Z M3.9 9.2 L13.1 9.2 L8.5 14 Z" fill="#fff"/></svg></div>
<div style="left:997px;top:2px;width:22px;height:22px;background:#a592ee;border:2px solid #8a78d8"><svg width="18" height="18" style="position:absolute;left:0;top:0"><path d="M4 4 L14 14 M14 4 L4 14" stroke="#fff" stroke-width="2.6" stroke-linecap="round"/></svg></div>
<div class="sec" style="left:21px;top:36px;height:16px;line-height:16px">西班牙人</div>
<div class="sec" style="left:21px;top:387px;height:16px;line-height:16px">毕尔巴鄂竞技</div>
<div style="left:424px;top:35px;height:16px;line-height:16px;color:#333">近</div>
<div class="sel s10" style="left:440px;top:34px;width:38px;height:17px;line-height:15px">10<i><svg width="11" height="8"><path d="M1 1.3 L5.3 5.6 L9.6 1.3" stroke="#000" stroke-width="2.1" fill="none"/></svg></i></div>
<div style="left:482px;top:35px;height:16px;line-height:16px;color:#333">场</div>
<div style="left:498px;top:34px;width:13px;height:13px;border-radius:2px;background:#fff;border:1px solid #767676"></div>
<div style="left:515px;top:35px;height:16px;line-height:16px;color:#333">同主</div>
<div style="left:538px;top:34px;width:13px;height:13px;border-radius:2px;background:#0075ff"><svg width="13" height="13" style="position:absolute;left:0;top:0"><path d="M2.5 6.5 L5.3 9.3 L10.5 3.5" stroke="#fff" stroke-width="1.8" fill="none"/></svg></div>
<div style="left:552px;top:35px;height:16px;line-height:16px;color:#333">西甲</div>
<div style="left:575px;top:34px;width:13px;height:13px;border-radius:2px;background:#0075ff"><svg width="13" height="13" style="position:absolute;left:0;top:0"><path d="M2.5 6.5 L5.3 9.3 L10.5 3.5" stroke="#fff" stroke-width="1.8" fill="none"/></svg></div>
<div style="left:589px;top:35px;height:16px;line-height:16px;color:#333">球会友谊</div>
<div style="left:636px;top:34px;width:13px;height:13px;border-radius:2px;background:#0075ff"><svg width="13" height="13" style="position:absolute;left:0;top:0"><path d="M2.5 6.5 L5.3 9.3 L10.5 3.5" stroke="#fff" stroke-width="1.8" fill="none"/></svg></div>
<div style="left:650px;top:35px;height:16px;line-height:16px;color:#333">西杯</div>
<div style="left:410px;top:386px;height:16px;line-height:16px;color:#333">近</div>
<div class="sel s10" style="left:425px;top:385px;width:38px;height:17px;line-height:15px">10<i><svg width="11" height="8"><path d="M1 1.3 L5.3 5.6 L9.6 1.3" stroke="#000" stroke-width="2.1" fill="none"/></svg></i></div>
<div style="left:467px;top:386px;height:16px;line-height:16px;color:#333">场</div>
<div style="left:483px;top:385px;width:13px;height:13px;border-radius:2px;background:#fff;border:1px solid #767676"></div>
<div style="left:501px;top:386px;height:16px;line-height:16px;color:#333">同客</div>
<div style="left:528px;top:385px;width:13px;height:13px;border-radius:2px;background:#0075ff"><svg width="13" height="13" style="position:absolute;left:0;top:0"><path d="M2.5 6.5 L5.3 9.3 L10.5 3.5" stroke="#fff" stroke-width="1.8" fill="none"/></svg></div>
<div style="left:541px;top:386px;height:16px;line-height:16px;color:#333">西甲</div>
<div style="left:565px;top:385px;width:13px;height:13px;border-radius:2px;background:#0075ff"><svg width="13" height="13" style="position:absolute;left:0;top:0"><path d="M2.5 6.5 L5.3 9.3 L10.5 3.5" stroke="#fff" stroke-width="1.8" fill="none"/></svg></div>
<div style="left:579px;top:386px;height:16px;line-height:16px;color:#333">欧罗巴杯</div>
<div style="left:626px;top:385px;width:13px;height:13px;border-radius:2px;background:#0075ff"><svg width="13" height="13" style="position:absolute;left:0;top:0"><path d="M2.5 6.5 L5.3 9.3 L10.5 3.5" stroke="#fff" stroke-width="1.8" fill="none"/></svg></div>
<div style="left:640px;top:386px;height:16px;line-height:16px;color:#333">西杯</div>
<div style="left:663px;top:385px;width:13px;height:13px;border-radius:2px;background:#0075ff"><svg width="13" height="13" style="position:absolute;left:0;top:0"><path d="M2.5 6.5 L5.3 9.3 L10.5 3.5" stroke="#fff" stroke-width="1.8" fill="none"/></svg></div>
<div style="left:677px;top:386px;height:16px;line-height:16px;color:#333">西超杯</div>
</body></html>
